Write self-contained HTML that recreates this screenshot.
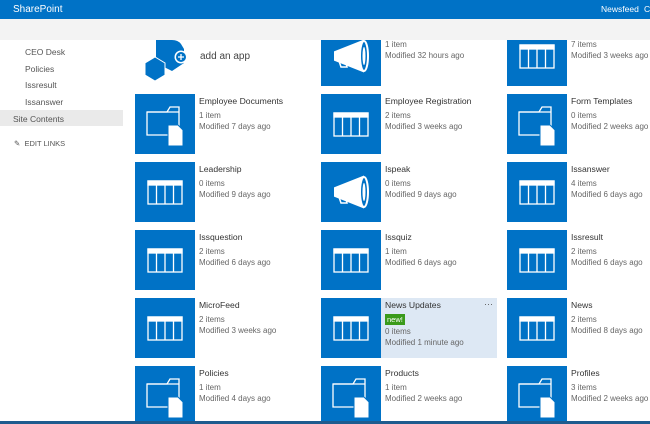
<!DOCTYPE html>
<html><head><meta charset="utf-8"><style>
*{margin:0;padding:0;box-sizing:border-box}
body{width:650px;height:424px;overflow:hidden;background:#fff;font-family:"Liberation Sans",sans-serif;position:relative}
.top{position:absolute;left:0;top:0;width:650px;height:19px;background:#0072c6;color:#fff;font-size:10px}
.band{position:absolute;left:0;top:19px;width:650px;height:21px;background:#f3f3f3}
.nav{position:absolute;left:0;top:40px;width:125px;font-size:8.5px;color:#555}
.nav div{position:absolute;white-space:nowrap}
.wrap{position:absolute;left:0;top:40px;width:650px;height:381px;overflow:hidden}
.t{position:absolute;width:60px;height:60px;background:#0072c6}
.t svg{position:absolute;left:0;top:0}
.tx{position:absolute;font-size:8px;color:#666;line-height:11px;white-space:nowrap}
.tx b{font-weight:normal;color:#333;font-size:8.6px;display:block;margin-bottom:3px}
.bl{position:absolute;left:0;top:421px;width:650px;height:3px;background:#1e5b8e}
</style></head><body>
<div class="top"><span style="position:absolute;left:13px;top:4px">SharePoint</span><span style="position:absolute;left:601px;top:4px;font-size:8.5px">Newsfeed</span><span style="position:absolute;left:644px;top:4px;font-size:8.5px">C</span></div>
<div class="band"></div>
<div class="nav">
<div style="left:25px;top:7px">CEO Desk</div>
<div style="left:25px;top:24px">Policies</div>
<div style="left:25px;top:40px">Issresult</div>
<div style="left:25px;top:57px">Issanswer</div>
<div style="left:0;top:70px;width:123px;height:16px;background:#eaeaea"></div>
<div style="left:13px;top:74px">Site Contents</div>
<div style="left:14px;top:99px;font-size:7.5px">&#9998;&nbsp; EDIT LINKS</div>
</div>
<svg width="0" height="0" style="position:absolute"><defs>
<g id="L" fill="none" stroke="#fff" stroke-width="1.3"><rect x="13" y="19" width="34" height="23"/><rect x="13" y="19" width="34" height="4" fill="#fff"/><line x1="21.5" y1="23" x2="21.5" y2="42"/><line x1="30" y1="23" x2="30" y2="42"/><line x1="38.5" y1="23" x2="38.5" y2="42"/></g>
<g id="F"><path d="M12 41V18h20l3-5h9v28z" fill="none" stroke="#fff" stroke-width="1.3"/><path d="M12 18h32" stroke="#fff" stroke-width="1.3"/><path d="M33 31h10l5 5v16H33z" fill="#fff" stroke="#0072c6" stroke-width="1"/></g>
<g id="M" fill="none" stroke="#fff" stroke-width="2"><path d="M14 26l28-11v30L14 34z" fill="#fff"/><ellipse cx="43" cy="30" rx="4" ry="15" fill="#0072c6"/><ellipse cx="43" cy="30" rx="1.5" ry="9" fill="#fff" stroke="none"/><path d="M18 35l2 6h6l-1-4" stroke-width="1.5"/></g>
</defs></svg>
<div class="wrap" id="w"></div>
<div class="bl"></div>
<script>
var d=[
[26,[['M','','1 item','Modified 32 hours ago'],['L','Reports','7 items','Modified 3 weeks ago']]],
[94,[['F','Employee Documents','1 item','Modified 7 days ago'],['L','Employee Registration','2 items','Modified 3 weeks ago'],['F','Form Templates','0 items','Modified 2 weeks ago']]],
[162,[['L','Leadership','0 items','Modified 9 days ago'],['M','Ispeak','0 items','Modified 9 days ago'],['L','Issanswer','4 items','Modified 6 days ago']]],
[230,[['L','Issquestion','2 items','Modified 6 days ago'],['L','Issquiz','1 item','Modified 6 days ago'],['L','Issresult','2 items','Modified 6 days ago']]],
[298,[['L','MicroFeed','2 items','Modified 3 weeks ago'],['L','News Updates','0 items','Modified 1 minute ago'],['L','News','2 items','Modified 8 days ago']]],
[366,[['F','Policies','1 item','Modified 4 days ago'],['F','Products','1 item','Modified 2 weeks ago'],['F','Profiles','3 items','Modified 2 weeks ago']]]];
var xs=[135,321,507],h='';
h+='<div style="position:absolute;left:380px;top:'+(298-40)+'px;width:117px;height:60px;background:#dde8f4"></div><div style="position:absolute;left:484px;top:'+(299-40)+'px;font-size:9px;color:#555">&middot;&middot;&middot;</div>';
h+='<svg style="position:absolute;left:144px;top:0" width="48" height="42"><path d="M12 0h16q6 0 9 4l3 5v14l-12 8-16-8z" fill="#0072c6"/><path d="M1 23l10-6 10 6v12l-10 6-10-6z" fill="#0072c6" stroke="#fff" stroke-width="1"/><circle cx="37" cy="17" r="6.5" fill="#fff"/><circle cx="37" cy="17" r="5" fill="#0072c6"/><path d="M37 14v6M34 17h6" stroke="#fff" stroke-width="1.3"/></svg><div style="position:absolute;left:200px;top:11px;font-size:10px;color:#444">add an app</div>';
d.forEach(function(r){var y=r[0]-40;var items=r[1];var off=items.length==2?1:0;items.forEach(function(it,i){var x=xs[i+off];
h+='<div class="t" style="left:'+x+'px;top:'+y+'px"><svg width="60" height="60"><use href="#'+it[0]+'"/></svg></div>';
var nw=it[1]=='News Updates'?'<span style="display:inline-block;background:#3a9a1b;color:#fff;font-size:7.5px;padding:0 2px;line-height:11px;margin-bottom:1px">new!</span><br>':'';
var ty=r[0]==26?y-1:y+2;
h+='<div class="tx" style="left:'+(x+64)+'px;top:'+ty+'px"><b>'+(it[1]||'&nbsp;')+'</b>'+nw+it[2]+'<br>'+it[3]+'</div>';});});
document.getElementById('w').innerHTML=h;
</script>
</body></html>
